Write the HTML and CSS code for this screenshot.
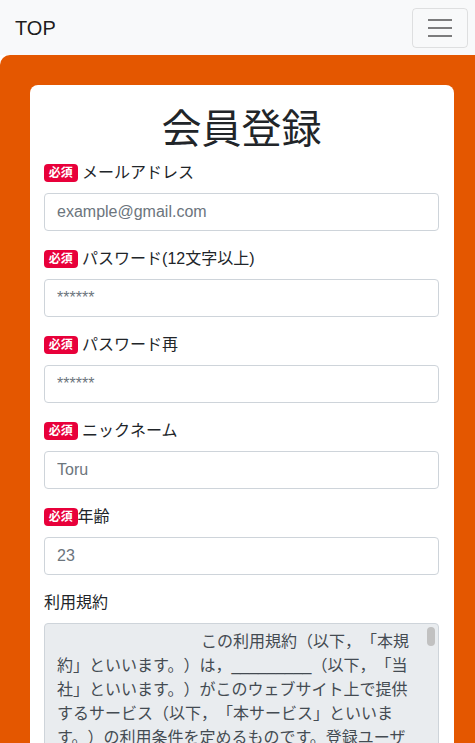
FILE: index.html
```html
<!DOCTYPE html>
<html lang="ja">
<head>
<meta charset="utf-8">
<title>会員登録</title>
<link rel="stylesheet" href="styles.css">
</head>
<body>
<nav class="navbar">
  <a class="brand" href="#">TOP</a>
  <button class="toggler" type="button" aria-label="menu">
    <svg class="toggler-icon" width="30" height="30" viewBox="0 0 30 30"><path d="M3 7h24M3 15h24M3 23h24" stroke="rgba(0,0,0,0.5)" stroke-width="2" stroke-linecap="butt"/></svg>
  </button>
</nav>
<main class="hero">
  <div class="card">
    <h1 class="title">会員登録</h1>
    <form class="form">
      <div class="group">
        <label class="label"><span class="badge">必須</span> メールアドレス</label>
        <input class="control" type="email" placeholder="example@gmail.com">
      </div>
      <div class="group">
        <label class="label"><span class="badge">必須</span> パスワード(12文字以上)</label>
        <input class="control" type="text" placeholder="******">
      </div>
      <div class="group">
        <label class="label"><span class="badge">必須</span> パスワード再</label>
        <input class="control" type="text" placeholder="******">
      </div>
      <div class="group">
        <label class="label"><span class="badge">必須</span> ニックネーム</label>
        <input class="control" type="text" placeholder="Toru">
      </div>
      <div class="group">
        <label class="label"><span class="badge">必須</span>年齢</label>
        <input class="control" type="text" placeholder="23">
      </div>
      <div class="group">
        <label class="label">利用規約</label>
        <div class="terms-wrap">
        <textarea class="control terms" readonly>
　　　　　　　　　この利用規約（以下，「本規約」といいます。）は，_________（以下，「当社」といいます。）がこのウェブサイト上で提供するサービス（以下，「本サービス」といいます。）の利用条件を定めるものです。登録ユーザーの皆さま（以下，「ユーザー」といいます。）には，本規約に従って，本サービスをご利用いただきます。

第1条（適用）
本規約は，ユーザーと当社との間の本サービスの利用に関わる一切の関係に適用されるものとします。
当社は本サービスに関し，本規約のほか，ご利用にあたってのルール等，各種の定め（以下，「個別規定」といいます。）をすることがあります。これら個別規定はその名称のいかんに関わらず，本規約の一部を構成するものとします。
本規約の規定が前条の個別規定の規定と矛盾する場合には，個別規定において特段の定めなき限り，個別規定の規定が優先されるものとします。

第2条（利用登録）
本サービスにおいては，登録希望者が本規約に同意の上，当社の定める方法によって利用登録を申請し，当社がこれを承認することによって，利用登録が完了するものとします。
当社は，利用登録の申請者に以下の事由があると判断した場合，利用登録の申請を承認しないことがあり，その理由については一切の開示義務を負わないものとします。
利用登録の申請に際して虚偽の事項を届け出た場合
本規約に違反したことがある者からの申請である場合
その他，当社が利用登録を相当でないと判断した場合

第3条（ユーザーIDおよびパスワードの管理）
ユーザーは，自己の責任において，本サービスのユーザーIDおよびパスワードを適切に管理するものとします。
ユーザーは，いかなる場合にも，ユーザーIDおよびパスワードを第三者に譲渡または貸与し，もしくは第三者と共用することはできません。</textarea>
        <span class="scroll-thumb"></span>
        </div>
      </div>
    </form>
  </div>
</main>
</body>
</html>
```

FILE: styles.css
```css
* {
  box-sizing: border-box;
}

html, body {
  margin: 0;
  padding: 0;
}

body {
  font-family: "Liberation Sans", "Noto Sans CJK JP", sans-serif;
  font-size: 16px;
  line-height: 1.5;
  color: #212529;
  background: #ffffff;
  text-spacing-trim: space-all;
}

.navbar {
  height: 55px;
  background: #f8f9fa;
  display: flex;
  align-items: center;
  justify-content: space-between;
  padding: 0 7px 0 15px;
}

.brand {
  font-size: 20px;
  line-height: 30px;
  color: rgba(0, 0, 0, 0.9);
  text-decoration: none;
}

.toggler {
  width: 56px;
  height: 40px;
  padding: 0;
  background: transparent;
  border: 1px solid rgba(0, 0, 0, 0.1);
  border-radius: 4px;
  display: flex;
  align-items: center;
  justify-content: center;
}

.toggler-icon {
  display: block;
}

.hero {
  background: #e45700;
  border-top-left-radius: 10px;
  padding: 30px 21px 0 30px;
}

.card {
  background: #ffffff;
  border-radius: 8px;
  padding: 20px 15px 20px 14px;
}

.title {
  margin: 0 0 8px;
  font-size: 40px;
  line-height: 48px;
  font-weight: 400;
  text-align: center;
}

.form {
  display: flex;
  flex-direction: column;
  gap: 16px;
}

.group {
  display: flex;
  flex-direction: column;
}

.label {
  display: block;
  margin-bottom: 8px;
  line-height: 24px;
}

.badge {
  display: inline-block;
  padding: 3px 4.8px;
  font-size: 12px;
  line-height: 1;
  font-weight: 700;
  color: #ffffff;
  background: #e8003a;
  border-radius: 4px;
  vertical-align: 1px;
}

.control {
  display: block;
  width: 100%;
  height: 38px;
  padding: 6px 12px;
  font-family: "Liberation Sans", "Noto Sans CJK JP", sans-serif;
  font-size: 16px;
  line-height: 24px;
  color: #495057;
  background: #ffffff;
  border: 1px solid #ced4da;
  border-radius: 4px;
}

.control::placeholder {
  color: #6c757d;
  opacity: 1;
}

.terms-wrap {
  position: relative;
}

.terms {
  height: 220px;
  padding-right: 26px;
  resize: none;
  background: #e9ecef;
  overflow-y: hidden;
  color: #444b52;
  text-spacing-trim: space-all;
}

.scroll-thumb {
  position: absolute;
  top: 4px;
  right: 4px;
  width: 8px;
  height: 19px;
  background: #c1c1c1;
  border-radius: 4px;
}
```
